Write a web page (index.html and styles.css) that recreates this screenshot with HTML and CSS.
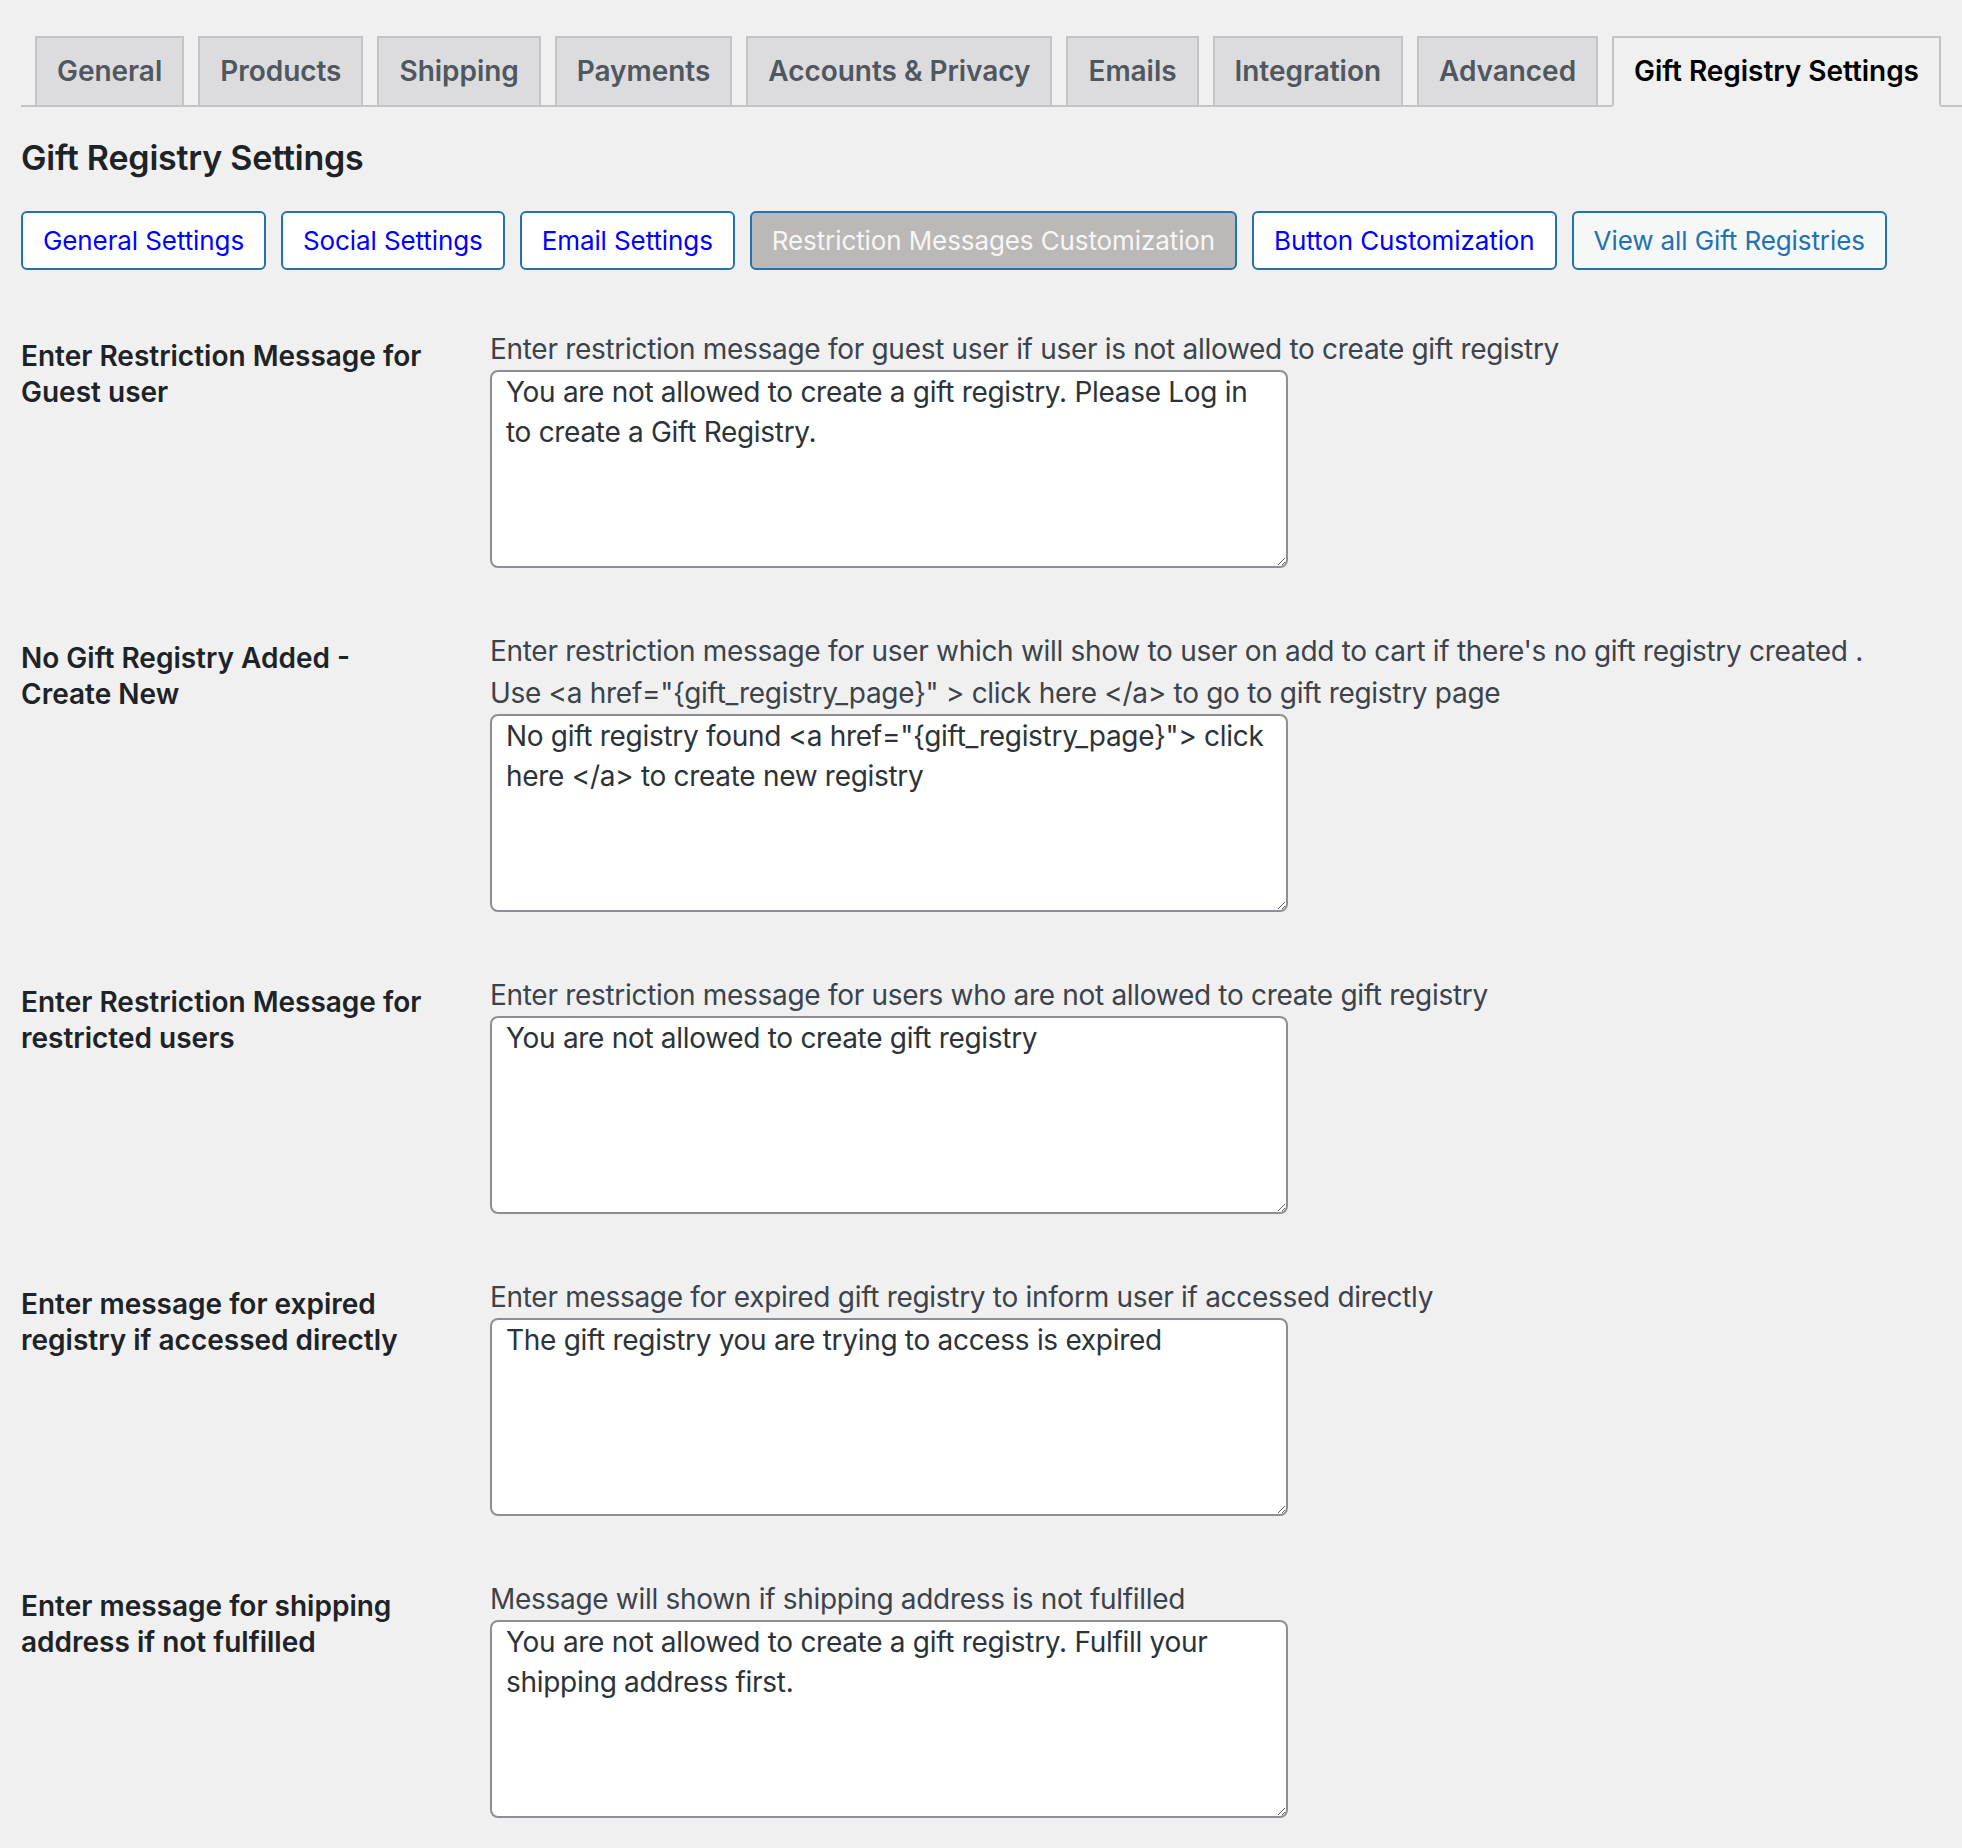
FILE: index.html
```html
<!DOCTYPE html>
<html lang="en">
<head>
<meta charset="utf-8">
<title>Gift Registry Settings</title>
<link rel="stylesheet" href="styles.css">
</head>
<body>
<div class="wrap">
  <nav class="nav-tabs">
    <a class="nav-tab">General</a>
    <a class="nav-tab">Products</a>
    <a class="nav-tab">Shipping</a>
    <a class="nav-tab">Payments</a>
    <a class="nav-tab">Accounts &amp; Privacy</a>
    <a class="nav-tab">Emails</a>
    <a class="nav-tab">Integration</a>
    <a class="nav-tab">Advanced</a>
    <a class="nav-tab nav-tab-active">Gift Registry Settings</a>
  </nav>

  <h2 class="page-title">Gift Registry Settings</h2>

  <div class="sub-nav">
    <a class="btn btn-link">General Settings</a>
    <a class="btn btn-link">Social Settings</a>
    <a class="btn btn-link">Email Settings</a>
    <a class="btn btn-current">Restriction Messages Customization</a>
    <a class="btn btn-link">Button Customization</a>
    <a class="btn btn-secondary">View all Gift Registries</a>
  </div>

  <div class="form-table">
    <div class="row">
      <div class="label">Enter Restriction Message for Guest user</div>
      <div class="field">
        <p class="desc">Enter restriction message for guest user if user is not allowed to create gift registry</p>
        <textarea class="msg">You are not allowed to create a gift registry. Please Log in to create a Gift Registry.</textarea>
      </div>
    </div>
    <div class="row">
      <div class="label">No Gift Registry Added - Create New</div>
      <div class="field">
        <p class="desc">Enter restriction message for user which will show to user on add to cart if there's no gift registry created .<br>Use &lt;a href="{gift_registry_page}" &gt; click here &lt;/a&gt; to go to gift registry page</p>
        <textarea class="msg">No gift registry found &lt;a href="{gift_registry_page}"&gt; click here &lt;/a&gt; to create new registry</textarea>
      </div>
    </div>
    <div class="row">
      <div class="label">Enter Restriction Message for restricted users</div>
      <div class="field">
        <p class="desc">Enter restriction message for users who are not allowed to create gift registry</p>
        <textarea class="msg">You are not allowed to create gift registry</textarea>
      </div>
    </div>
    <div class="row">
      <div class="label">Enter message for expired registry if accessed directly</div>
      <div class="field">
        <p class="desc">Enter message for expired gift registry to inform user if accessed directly</p>
        <textarea class="msg">The gift registry you are trying to access is expired</textarea>
      </div>
    </div>
    <div class="row">
      <div class="label">Enter message for shipping address if not fulfilled</div>
      <div class="field">
        <p class="desc">Message will shown if shipping address is not fulfilled</p>
        <textarea class="msg">You are not allowed to create a gift registry. Fulfill your shipping address first.</textarea>
      </div>
    </div>
  </div>
</div>
</body>
</html>
```

FILE: styles.css
```css
html, body {
  margin: 0;
  padding: 0;
  background: #f0f0f1;
}

body {
  font-family: Inter, "Noto Sans", "Liberation Sans", sans-serif;
  color: #3c434a;
  overflow: hidden;
}

.wrap {
  padding: 36px 0 0 21px;
}

/* Top tabs */
.nav-tabs {
  display: flex;
  border-bottom: 2px solid #c3c4c7;
  margin: 0;
  padding: 0;
}

.nav-tab {
  display: block;
  margin-left: 14px;
  margin-bottom: -2px;
  padding: 10px 20px;
  font-size: 28px;
  line-height: 47px;
  font-weight: 600;
  letter-spacing: -0.04px;
  color: #50575e;
  background: #dcdcde;
  border: 2px solid #c3c4c7;
  white-space: nowrap;
}

.nav-tab-active {
  background: #f0f0f1;
  color: #000;
  border-bottom-color: #f0f0f1;
}

/* Heading */
.page-title {
  margin: 30px 0 0 0;
  font-size: 34px;
  line-height: 42px;
  font-weight: 600;
  letter-spacing: -0.2px;
  color: #1d2327;
}

/* Sub navigation buttons */
.sub-nav {
  display: flex;
  gap: 15px;
  margin-top: 32px;
}

.btn {
  display: block;
  box-sizing: border-box;
  height: 59px;
  padding: 0 20px;
  font-size: 26px;
  line-height: 55px;
  letter-spacing: -0.1px;
  border: 2px solid #2271b1;
  border-radius: 6px;
  white-space: nowrap;
}

.btn-link {
  background: #fff;
  color: #0000ff;
}

.btn-current {
  background: #bcb8b7;
  color: #f6f6f6;
}

.btn-secondary {
  background: #f6f7f7;
  color: #2271b1;
}

/* Form rows */
.form-table {
  margin-top: 28px;
}

.row {
  display: grid;
  grid-template-columns: 469px 1fr;
  padding-bottom: 32px;
}

.label {
  padding-top: 40px;
  font-size: 28px;
  line-height: 36px;
  font-weight: 600;
  color: #1d2327;
  max-width: 420px;
}

.field {
  padding-top: 30px;
}

.desc {
  margin: 0;
  font-size: 28px;
  line-height: 42px;
  letter-spacing: -0.3px;
  color: #3c434a;
}

.msg {
  display: block;
  box-sizing: border-box;
  width: 798px;
  height: 198px;
  margin: 0;
  padding: 0 12px 0 14px;
  font-family: Inter, "Noto Sans", "Liberation Sans", sans-serif;
  font-size: 28px;
  line-height: 40px;
  letter-spacing: -0.3px;
  color: #2c3338;
  background: #fff;
  border: 2px solid #8c8f94;
  border-radius: 8px;
  outline: none;
}
```
